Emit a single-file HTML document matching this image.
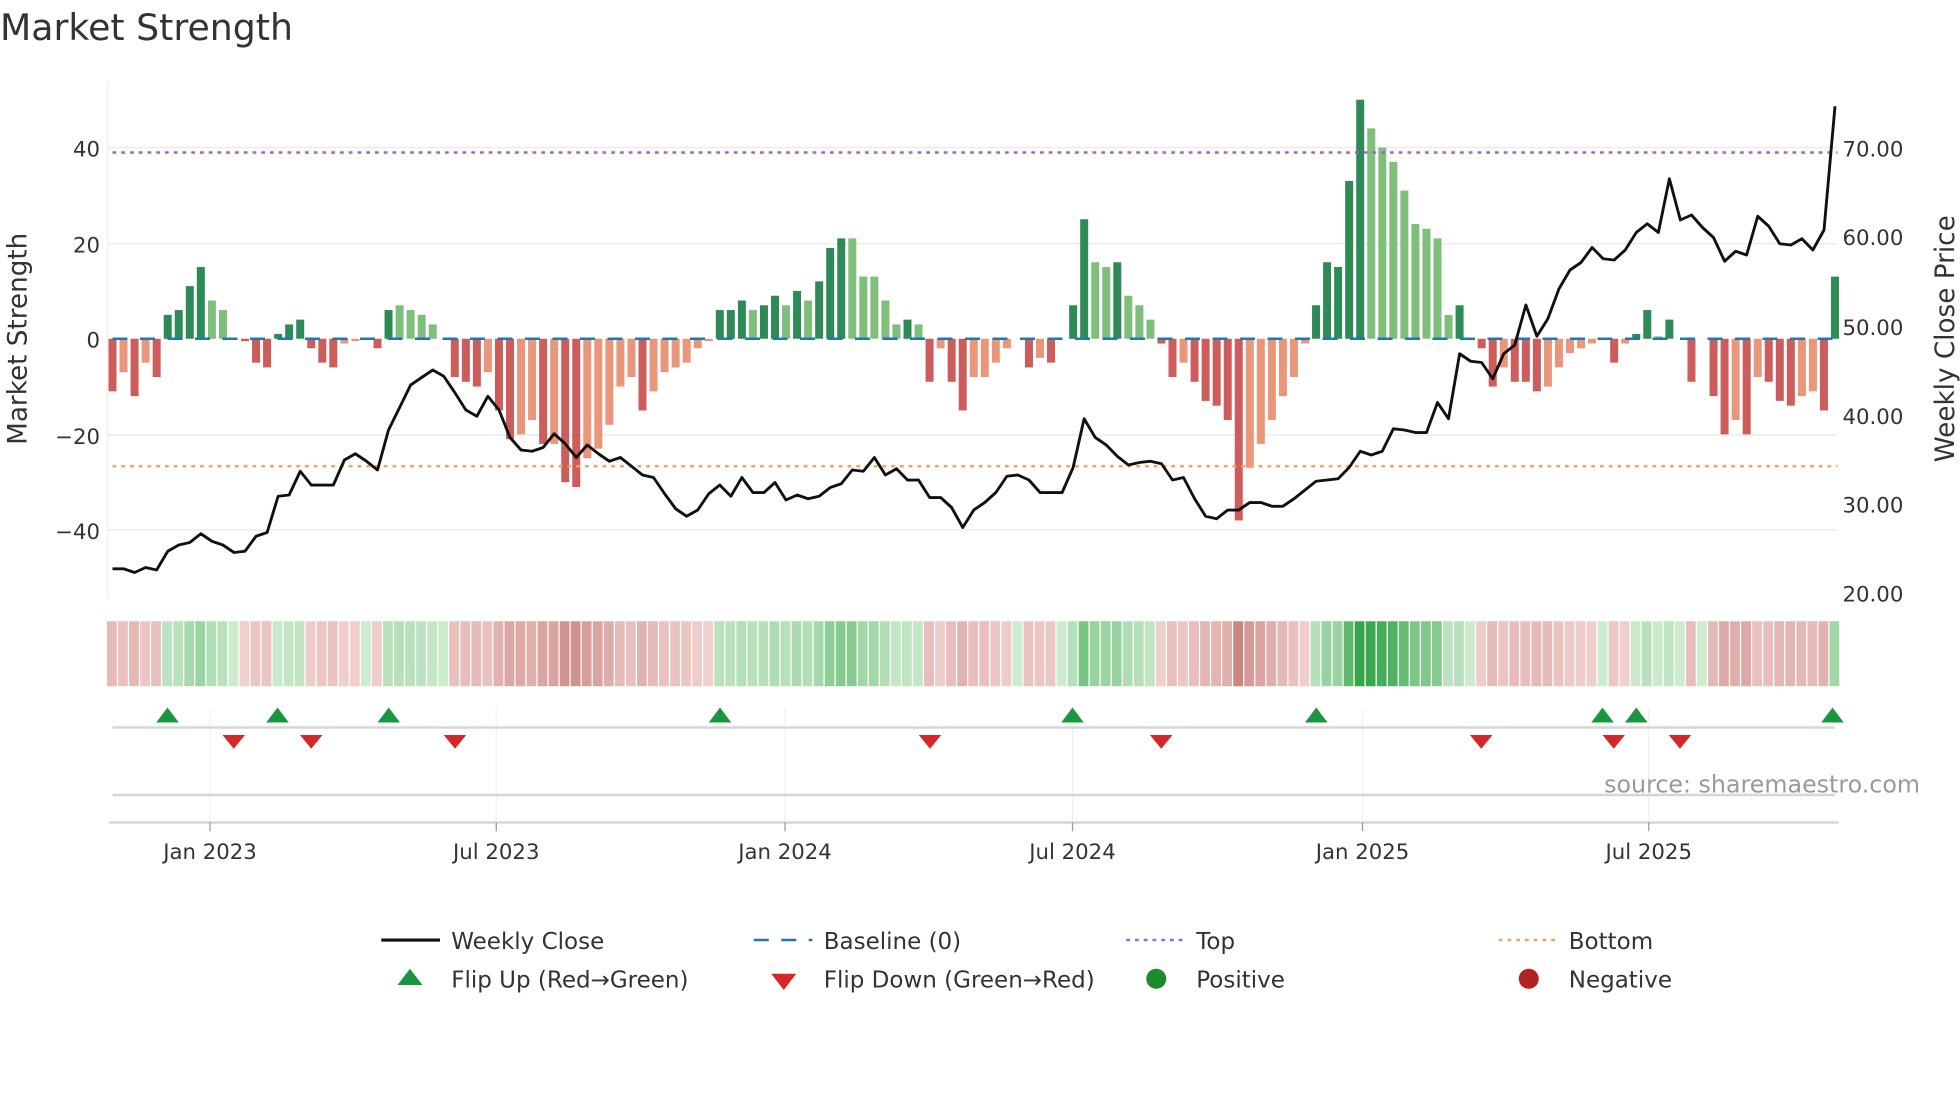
<!DOCTYPE html>
<html><head><meta charset="utf-8"><style>
html,body{margin:0;padding:0;background:#fff;}
svg{display:block;font-family:"DejaVu Sans","Liberation Sans",sans-serif;}
</style></head><body>
<svg id="s" width="1960" height="1102" viewBox="0 0 1568 881.6" xmlns="http://www.w3.org/2000/svg">
<rect width="1568" height="882" fill="#fff"/>
<text x="0" y="32" font-size="29" fill="#333">Market Strength</text>
<g stroke="#ececf0" stroke-width="1.2">
<line x1="86" y1="118" x2="1470" y2="118"/><line x1="86" y1="195" x2="1470" y2="195"/>
<line x1="86" y1="348" x2="1470" y2="348"/><line x1="86" y1="424" x2="1470" y2="424"/>
</g>
<line x1="86" y1="65" x2="86" y2="478" stroke="#f0f0f0"/>
<g font-size="17" fill="#333" text-anchor="end">
<text x="80" y="125">40</text><text x="80" y="202">20</text><text x="80" y="278">0</text>
<text x="80" y="355">−20</text><text x="80" y="431">−40</text>
</g>
<g font-size="17" fill="#333">
<text x="1474" y="125">70.00</text><text x="1474" y="196">60.00</text><text x="1474" y="268">50.00</text>
<text x="1474" y="339">40.00</text><text x="1474" y="410">30.00</text><text x="1474" y="481">20.00</text>
</g>
<text transform="translate(21,271) rotate(-90)" font-size="21" fill="#333" text-anchor="middle">Market Strength</text>
<text transform="translate(1563,271) rotate(-90)" font-size="21" fill="#333" text-anchor="middle">Weekly Close Price</text>
<g id="bars"></g>
<line x1="90" y1="271" x2="1470" y2="271" stroke="#1f77b4" stroke-width="2" stroke-dasharray="12,10"/>
<line x1="90" y1="122" x2="1470" y2="122" stroke="#9966dd" stroke-width="2" stroke-dasharray="3,4"/>
<line x1="90" y1="373" x2="1470" y2="373" stroke="#f4a460" stroke-width="2" stroke-dasharray="3,4"/>
<polyline id="price" fill="none" stroke="#111" stroke-width="2.3" stroke-linejoin="round"/>
<g id="heat"></g>
<g stroke="#eef0f3" stroke-width="1">
<line x1="168" y1="567" x2="168" y2="658"/><line x1="397" y1="567" x2="397" y2="658"/>
<line x1="628" y1="567" x2="628" y2="658"/><line x1="858" y1="567" x2="858" y2="658"/>
<line x1="1090" y1="567" x2="1090" y2="658"/><line x1="1319" y1="567" x2="1319" y2="658"/>
</g>
<line x1="90" y1="582" x2="1468" y2="582" stroke="#d4d6d8" stroke-width="2"/>
<line x1="90" y1="636" x2="1468" y2="636" stroke="#d4d6d8" stroke-width="2"/>
<line x1="87" y1="658" x2="1471" y2="658" stroke="#d4d6d8" stroke-width="2"/>
<g stroke="#999" stroke-width="1">
<line x1="168" y1="658" x2="168" y2="665"/><line x1="397" y1="658" x2="397" y2="665"/>
<line x1="628" y1="658" x2="628" y2="665"/><line x1="858" y1="658" x2="858" y2="665"/>
<line x1="1090" y1="658" x2="1090" y2="665"/><line x1="1319" y1="658" x2="1319" y2="665"/>
</g>
<g id="marks"></g>
<text x="1536" y="634" font-size="19" fill="#999" text-anchor="end">source: sharemaestro.com</text>
<g font-size="17" fill="#333" text-anchor="middle">
<text x="168" y="687">Jan 2023</text><text x="397" y="687">Jul 2023</text><text x="628" y="687">Jan 2024</text>
<text x="858" y="687">Jul 2024</text><text x="1090" y="687">Jan 2025</text><text x="1319" y="687">Jul 2025</text>
</g>
<g font-size="18.4" fill="#333">
<line x1="305" y1="752" x2="352" y2="752" stroke="#111" stroke-width="2.5"/>
<text x="361" y="759">Weekly Close</text>
<line x1="603" y1="752" x2="650" y2="752" stroke="#1f77b4" stroke-width="2" stroke-dasharray="12,10"/>
<text x="659" y="759">Baseline (0)</text>
<line x1="901" y1="752" x2="948" y2="752" stroke="#9966dd" stroke-width="2" stroke-dasharray="3,4"/>
<text x="957" y="759">Top</text>
<line x1="1199" y1="752" x2="1246" y2="752" stroke="#f4a460" stroke-width="2" stroke-dasharray="3,4"/>
<text x="1255" y="759">Bottom</text>
<polygon points="328,775 338,788 318,788" fill="#1a9641"/>
<text x="361" y="790">Flip Up (Red→Green)</text>
<polygon points="617,779 637,779 627,792" fill="#d62728"/>
<text x="659" y="790">Flip Down (Green→Red)</text>
<circle cx="925" cy="783" r="8" fill="#1e8a2e"/>
<text x="957" y="790">Positive</text>
<circle cx="1223" cy="783" r="8" fill="#b22222"/>
<text x="1255" y="790">Negative</text>
</g>
</svg>
<script>
var B=[[-11,1],[-7,0],[-12,1],[-5,0],[-8,1],[5,1],[6,1],[11,1],[15,1],[8,0],[6,0],[0,0],[-0.5,1],[-5,1],[-6,1],[1,1],[3,1],[4,1],[-2,1],[-5,1],[-6,1],[-1,0],[-0.5,0],[0,0],[-2,1],[6,1],[7,0],[6,0],[5,0],[3,0],[0,0],[-8,1],[-9,1],[-10,1],[-7,0],[-15,1],[-21,1],[-20,0],[-17,0],[-22,1],[-22,0],[-30,1],[-31,1],[-25,0],[-23,0],[-18,0],[-10,0],[-8,0],[-15,1],[-11,0],[-7,0],[-6,0],[-5,0],[-2,0],[-0.5,0],[6,1],[6,1],[8,1],[6,0],[7,1],[9,1],[7,0],[10,1],[8,0],[12,1],[19,1],[21,1],[21,0],[13,0],[13,0],[8,0],[3,0],[4,1],[3,0],[-9,1],[-2,0],[-9,1],[-15,1],[-8,0],[-8,0],[-5,0],[-2,0],[0,0],[-6,1],[-4,0],[-5,1],[0,0],[7,1],[25,1],[16,0],[15,0],[16,1],[9,0],[7,0],[4,0],[-1,1],[-8,1],[-5,0],[-9,1],[-13,1],[-14,1],[-17,1],[-38,1],[-27,0],[-22,0],[-17,0],[-12,0],[-8,0],[-1,0],[7,1],[16,1],[15,1],[33,1],[50,1],[44,0],[40,0],[37,0],[31,0],[24,0],[23,0],[21,0],[5,0],[7,1],[0,0],[-2,1],[-10,1],[-6,0],[-9,1],[-9,1],[-11,1],[-10,0],[-6,0],[-3,0],[-2,0],[-1,0],[0,0],[-5,1],[-1,0],[1,1],[6,1],[0.5,0],[4,1],[0,0],[-9,1],[0,0],[-12,1],[-20,1],[-17,0],[-20,1],[-8,0],[-9,1],[-13,1],[-14,1],[-12,0],[-11,0],[-15,1],[13,1]];
var n=B.length,x0=90,dx=(1468-90)/(n-1),ns="http://www.w3.org/2000/svg";
var gb=document.getElementById('bars'),gh=document.getElementById('heat');
function el(t,a,p){var e=document.createElementNS(ns,t);for(var k in a)e.setAttribute(k,a[k]);p.appendChild(e);return e;}
for(var i=0;i<n;i++){var v=B[i][0],d=B[i][1],x=x0+i*dx,h=Math.abs(v)*3.825;
var c=v>=0?(d?'#2e8b57':'#7fbf7b'):(d?'#cd5c5c':'#e9967a');
if(h>0.3)el('rect',{x:x-3.2,y:v>=0?271-h:271,width:6.4,height:h,fill:c},gb);
var a=Math.min(1,Math.abs(v)/45);var col;
if(v>=0){var r=Math.round(205-150*a),g=Math.round(235-70*a),b=Math.round(205-130*a);col='rgb('+r+','+g+','+b+')';}
else{var r=Math.round(240-45*a),g=Math.round(208-88*a),b=Math.round(205-90*a);col='rgb('+r+','+g+','+b+')';}
el('rect',{x:x-4.4,y:497,width:dx-1,height:52,fill:col},gh);}
var P=[455,455,458,454,456,441,436,434,427,433,436,442,441,429,426,397,396,377,388,388,388,368,363,369,376,344,326,308,302,296,301,314,328,333,317,328,350,360,361,358,347,355,366,356,363,369,366,373,380,382,395,407,413,408,395,388,397,382,394,394,386,400,396,399,397,390,387,376,377,366,380,375,384,384,398,398,406,422,408,402,394,381,380,384,394,394,394,374,335,350,356,365,372,370,369,371,384,382,399,413,415,408,408,402,402,405,405,399,392,385,384,383,374,361,364,361,343,344,346,346,322,335,283,289,290,303,283,276,244,269,255,231,216,210,198,207,208,200,186,179,186,143,176,172,182,190,209,201,204,173,181,195,196,191,200,184,85];
var pts=[];for(var i=0;i<P.length;i++)pts.push((x0+i*(1468-90)/(P.length-1)).toFixed(1)+','+P[i]);
document.getElementById('price').setAttribute('points',pts.join(' '));
var gm=document.getElementById('marks');
[134,222,311,576,858,1053,1282,1309,1466].forEach(function(x){el('polygon',{points:(x)+',566 '+(x+9)+',578 '+(x-9)+',578',fill:'#1a9641'},gm);});
[187,249,364,744,929,1185,1291,1344].forEach(function(x){el('polygon',{points:(x-9)+',588 '+(x+9)+',588 '+x+',599',fill:'#d62728'},gm);});
</script>
</body></html>
